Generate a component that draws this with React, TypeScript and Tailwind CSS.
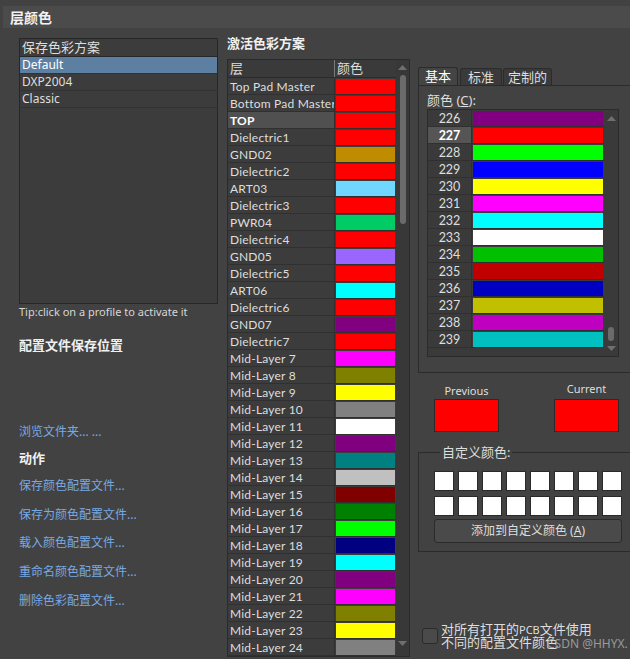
import React from "react";

const layers: [string, string][] = [
  ["Top Pad Master", "#ff0000"],
  ["Bottom Pad Master", "#ff0000"],
  ["TOP", "#ff0000"],
  ["Dielectric1", "#ff0000"],
  ["GND02", "#bf8c00"],
  ["Dielectric2", "#ff0000"],
  ["ART03", "#70d8ff"],
  ["Dielectric3", "#ff0000"],
  ["PWR04", "#00cc66"],
  ["Dielectric4", "#ff0000"],
  ["GND05", "#9966ff"],
  ["Dielectric5", "#ff0000"],
  ["ART06", "#00ffff"],
  ["Dielectric6", "#ff0000"],
  ["GND07", "#800080"],
  ["Dielectric7", "#ff0000"],
  ["Mid-Layer 7", "#ff00ff"],
  ["Mid-Layer 8", "#808000"],
  ["Mid-Layer 9", "#ffff00"],
  ["Mid-Layer 10", "#808080"],
  ["Mid-Layer 11", "#ffffff"],
  ["Mid-Layer 12", "#800080"],
  ["Mid-Layer 13", "#008080"],
  ["Mid-Layer 14", "#c0c0c0"],
  ["Mid-Layer 15", "#800000"],
  ["Mid-Layer 16", "#008000"],
  ["Mid-Layer 17", "#00ff00"],
  ["Mid-Layer 18", "#000080"],
  ["Mid-Layer 19", "#00ffff"],
  ["Mid-Layer 20", "#800080"],
  ["Mid-Layer 21", "#ff00ff"],
  ["Mid-Layer 22", "#808000"],
  ["Mid-Layer 23", "#ffff00"],
  ["Mid-Layer 24", "#808080"],
];

const palette: [number, string][] = [
  [226, "#800080"],
  [227, "#ff0000"],
  [228, "#00ff00"],
  [229, "#0000ff"],
  [230, "#ffff00"],
  [231, "#ff00ff"],
  [232, "#00ffff"],
  [233, "#ffffff"],
  [234, "#00c000"],
  [235, "#c00000"],
  [236, "#0000c0"],
  [237, "#c0c000"],
  [238, "#c000c0"],
  [239, "#00c0c0"],
];

const actions = [
  "保存颜色配置文件...",
  "保存为颜色配置文件...",
  "载入颜色配置文件...",
  "重命名颜色配置文件...",
  "删除色彩配置文件...",
];

function Arrow({ down = false }: { down?: boolean }) {
  return (
    <svg width="9" height="5" viewBox="0 0 9 5" className="block">
      <path d={down ? "M0 0h9L4.5 5z" : "M0 5h9L4.5 0z"} fill="#6f6f6f" />
    </svg>
  );
}

export default function App() {
  return (
    <div className="relative h-[659px] w-[630px] overflow-hidden bg-[#424242] font-['Noto_Sans','Noto_Sans_CJK_SC',sans-serif] text-[12px] text-[#dedede]">
      {/* title bar */}
      <div className="ml-[3px] mt-[6px] flex h-[22px] items-center bg-[#4b4b4b] pl-[7px] text-[14px] font-bold text-[#f2f2f2]">
        层颜色
      </div>

      <div className="flex pt-[6px]">
        {/* left column */}
        <div className="mt-[4px] flex w-[218px] shrink-0 flex-col pl-[19px]">
          <div className="h-[266px] border border-[#272727] bg-[#3c3c3c]">
            <div className="h-[18px] border-b border-[#272727] pl-[2px] text-[13px] leading-[17px]">
              保存色彩方案
            </div>
            <div className="h-[17px] border-b border-[#333] bg-[#5d7fa2] pl-[2px] leading-[16px] text-white">
              Default
            </div>
            <div className="h-[17px] border-b border-[#333] pl-[2px] leading-[16px]">DXP2004</div>
            <div className="h-[17px] border-b border-[#333] pl-[2px] leading-[16px]">Classic</div>
          </div>
          <div className="whitespace-nowrap text-[11px] leading-[16px] text-[#d6d6d6]">
            Tip:click on a profile to activate it
          </div>
          <div className="mt-[16px] text-[13px] font-bold leading-[18px] text-[#f0f0f0]">配置文件保存位置</div>
          <div className="mt-[69px] leading-[18px] text-[#78a9e4]">浏览文件夹... ...</div>
          <div className="mt-[8px] text-[13px] font-bold leading-[18px] text-[#f0f0f0]">动作</div>
          <div className="mt-[5px] flex flex-col">
            {actions.map((a) => (
              <div key={a} className="leading-[28.7px] text-[#78a9e4]">
                {a}
              </div>
            ))}
          </div>
        </div>

        {/* middle column */}
        <div className="ml-[9px] flex w-[183px] shrink-0 flex-col">
          <div className="text-[13px] font-bold leading-[18px] text-[#f0f0f0]">激活色彩方案</div>
          <div className="mt-[7px] flex border border-[#2b2b2b] bg-[#3c3c3c]">
            <div className="w-[168px] font-['Lato','Noto_Sans_CJK_SC',sans-serif] text-[12px]">
              <div className="flex h-[18px] border-b border-[#2b2b2b] bg-[#3a3a3a] font-['Noto_Sans','Noto_Sans_CJK_SC',sans-serif] text-[13px] leading-[17px]">
                <div className="w-[107px] border-r border-[#7a7a7a] pl-[2px]">层</div>
                <div className="pl-[2px]">颜色</div>
              </div>
              {layers.map(([name, color]) => {
                const sel = name === "TOP";
                return (
                  <div key={name} className="flex h-[17px] border-b border-[#303030]">
                    <div
                      className={`w-[107px] overflow-hidden whitespace-nowrap border-r border-[#303030] pl-[2px] pt-[1px] leading-[16px] tracking-[0.2px] ${
                        sel ? "bg-[#505050] font-bold text-white" : ""
                      }`}
                    >
                      {name}
                    </div>
                    <div className="flex-1 px-[1px] pt-[1px]">
                      <div className="h-[15px]" style={{ background: color }} />
                    </div>
                  </div>
                );
              })}
            </div>
            <div className="flex w-[13px] flex-col items-center bg-[#383838]">
              <div className="mt-[5px]">
                <Arrow />
              </div>
              <div className="mt-[5px] h-[149px] w-[6px] rounded-full bg-[#6b6b6b]" />
              <div className="mt-auto mb-[10px]">
                <Arrow down />
              </div>
            </div>
          </div>
        </div>

        {/* right column */}
        <div className="ml-[8px] mt-[33px] flex w-[220px] shrink-0 flex-col">
          <div className="flex h-[18px] items-end text-[13px]">
            <div className="h-[18px] w-[40px] rounded-t-[3px] border border-b-0 border-[#2b2b2b] bg-[#444] text-center leading-[17px] text-white">
              基本
            </div>
            <div className="ml-[2px] h-[17px] w-[42px] rounded-t-[3px] border border-b-0 border-[#2b2b2b] bg-[#3a3a3a] text-center leading-[16px]">
              标准
            </div>
            <div className="ml-[1px] h-[17px] w-[49px] rounded-t-[3px] border border-b-0 border-[#2b2b2b] bg-[#3a3a3a] text-center leading-[16px]">
              定制的
            </div>
          </div>
          <div className="h-[288px] border border-[#2b2b2b] pl-[8px] pt-[6px]">
            <div className="text-[13px] leading-[16px]">
              颜色 (<span className="underline">C</span>):
            </div>
            <div className="mt-[1px] flex h-[248px] w-[192px] border border-[#2b2b2b] bg-[#3a3a3a]">
              <div className="w-[176px] font-['Lato',sans-serif] text-[12.5px]">
                {palette.map(([n, color]) => {
                  const sel = n === 227;
                  return (
                    <div key={n} className="flex h-[17px] border-b border-[#303030]">
                      <div
                        className={`w-[44px] border-r border-[#303030] pt-[1px] text-center leading-[16px] ${
                          sel ? "bg-[#555] font-bold text-white" : ""
                        }`}
                      >
                        {n}
                      </div>
                      <div className="flex-1 px-[1px] pt-[1px]">
                        <div className="h-[15px]" style={{ background: color }} />
                      </div>
                    </div>
                  );
                })}
              </div>
              <div className="flex w-[14px] flex-col items-center">
                <div className="mt-[6px]">
                  <Arrow />
                </div>
                <div className="mt-auto h-[14px] w-[6px] rounded-full bg-[#6b6b6b]" />
                <div className="mb-[5px] mt-[5px]">
                  <Arrow down />
                </div>
              </div>
            </div>
          </div>

          <div className="mt-[10px] flex pl-[16px]">
            <div className="flex w-[65px] flex-col items-center">
              <div className="text-[11px] leading-[16px]">Previous</div>
              <div className="h-[33px] w-[65px] border border-[#2a2a2a] bg-[#ff0000]" />
            </div>
            <div className="ml-[55px] flex w-[65px] flex-col items-center">
              <div className="mb-[2px] -mt-[2px] text-[11px] leading-[16px]">Current</div>
              <div className="h-[33px] w-[65px] border border-[#2a2a2a] bg-[#ff0000]" />
            </div>
          </div>

          <fieldset className="mt-[12px] border border-[#2b2b2b] pb-[8px] pl-[15px]">
            <legend className="ml-[6px] px-[2px] text-[13px] leading-[16px]">自定义颜色:</legend>
            <div className="mt-[11px] grid w-[188px] grid-cols-8 gap-x-[4px] gap-y-[5px]">
              {Array.from({ length: 16 }).map((_, i) => (
                <div key={i} className="h-[20px] w-[20px] border border-[#2a2a2a] bg-white" />
              ))}
            </div>
            <div className="mt-[3px] h-[24px] w-[188px] rounded-[3px] border border-[#2a2a2a] bg-[#4a4a4a] text-center text-[12px] leading-[22px]">
              添加到自定义颜色 (<span className="underline">A</span>)
            </div>
          </fieldset>

          <div className="mt-[71px] flex items-start pl-[4px]">
            <div className="mt-[5px] h-[16px] w-[16px] rounded-[3px] border border-[#2a2a2a] bg-[#4a4a4a]" />
            <div className="ml-[3px] text-[13px] leading-[12px]">
              对所有打开的<span className="text-[11px]">PCB</span>文件使用
              <br />
              不同的配置文件颜色
            </div>
          </div>
        </div>
      </div>

      <div className="absolute left-[547px] top-[636px] text-[12px] leading-[16px] text-[#9a9a9a]">CSDN @HHYX.</div>
    </div>
  );
}
